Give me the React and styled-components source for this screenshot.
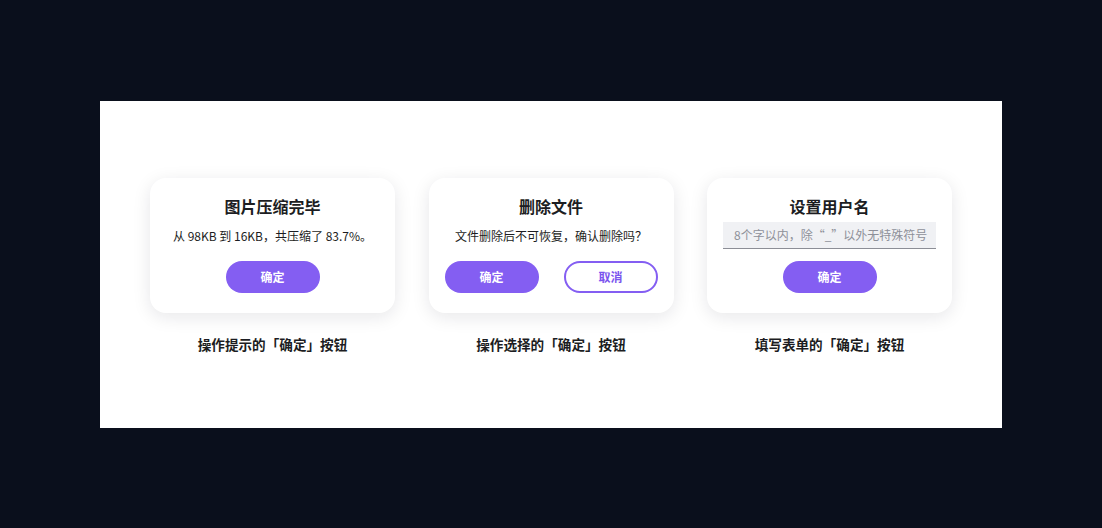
import React from 'react'
import styled, { createGlobalStyle } from 'styled-components'

const GlobalStyle = createGlobalStyle`
  html, body { margin: 0; padding: 0; }
  body {
    background: #0a0f1c;
    font-family: "Noto Sans CJK SC", "Noto Sans", sans-serif;
  }
`

const Page = styled.div`
  width: 1102px;
  height: 528px;
  display: flex;
  align-items: center;
  justify-content: center;
`

const Panel = styled.div`
  width: 902px;
  height: 327px;
  background: #fff;
  box-sizing: border-box;
  padding: 77px 50px 0;
  display: grid;
  grid-template-columns: repeat(3, 245px);
  justify-content: space-between;
  align-items: start;
`

const Column = styled.div`
  display: flex;
  flex-direction: column;
  align-items: center;
`

const Card = styled.div`
  width: 245px;
  height: 135px;
  box-sizing: border-box;
  background: #fff;
  border-radius: 16px;
  box-shadow: 0 4px 18px rgba(20, 24, 40, 0.1);
  padding: 16px 16px 20px;
  display: flex;
  flex-direction: column;
  align-items: center;
`

const Title = styled.div`
  font-size: 16px;
  line-height: 24px;
  font-weight: 700;
  color: #1c1d22;
`

const Text = styled.div`
  margin-top: 9px;
  font-size: 12px;
  line-height: 18px;
  color: #1c1d22;
`

const Actions = styled.div`
  margin-top: ${p => p.$gap || 16}px;
  display: flex;
  width: 100%;
  justify-content: ${p => (p.$split ? 'space-between' : 'center')};
`

const Button = styled.button`
  width: 94px;
  height: 32px;
  box-sizing: border-box;
  border-radius: 16px;
  font-family: inherit;
  font-size: 12px;
  font-weight: 700;
  cursor: pointer;
  background: ${p => (p.$ghost ? '#fff' : '#845ef2')};
  color: ${p => (p.$ghost ? '#7b55ee' : '#fff')};
  border: ${p => (p.$ghost ? '2px solid #845ef2' : 'none')};
  padding: 0;
`

const Input = styled.input`
  margin-top: 4px;
  width: 100%;
  height: 27px;
  box-sizing: border-box;
  border: none;
  border-bottom: 1px solid #8c8e96;
  background: #f0f1f4;
  padding: 0 8px 0 11px;
  font-family: inherit;
  font-size: 12px;
  color: #1c1d22;
  outline: none;
  &::placeholder { color: #8e9099; }
`

const Caption = styled.div`
  margin-top: 21px;
  font-size: 13.6px;
  line-height: 20px;
  font-weight: 700;
  color: #1c1d22;
`

export default function App() {
  return (
    <>
      <GlobalStyle />
      <Page>
        <Panel>
          <Column>
            <Card>
              <Title>图片压缩完毕</Title>
              <Text>从 98KB 到 16KB，共压缩了 83.7%。</Text>
              <Actions>
                <Button>确定</Button>
              </Actions>
            </Card>
            <Caption>操作提示的「确定」按钮</Caption>
          </Column>
          <Column>
            <Card>
              <Title>删除文件</Title>
              <Text>文件删除后不可恢复，确认删除吗？</Text>
              <Actions $split>
                <Button>确定</Button>
                <Button $ghost>取消</Button>
              </Actions>
            </Card>
            <Caption>操作选择的「确定」按钮</Caption>
          </Column>
          <Column>
            <Card>
              <Title>设置用户名</Title>
              <Input placeholder="8个字以内，除“_”以外无特殊符号" />
              <Actions $gap={12}>
                <Button>确定</Button>
              </Actions>
            </Card>
            <Caption>填写表单的「确定」按钮</Caption>
          </Column>
        </Panel>
      </Page>
    </>
  )
}
